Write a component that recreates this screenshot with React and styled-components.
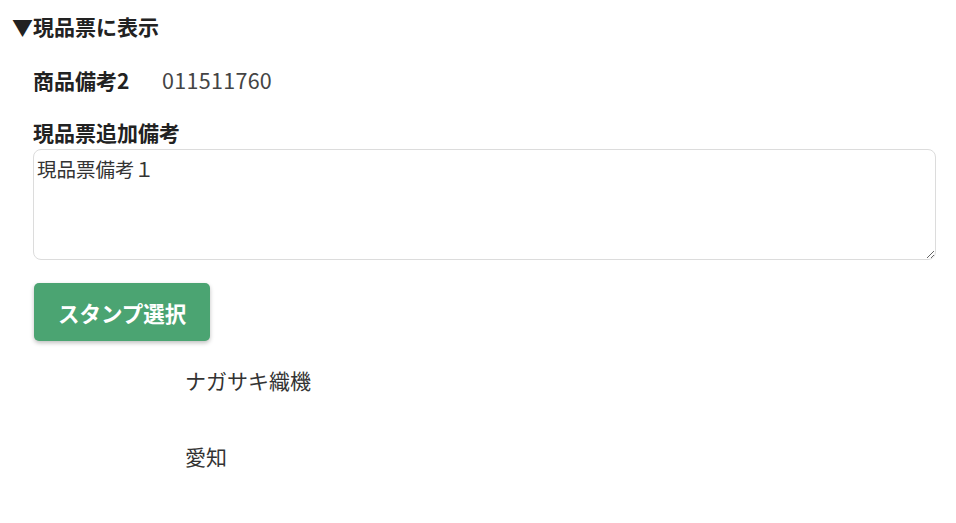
import React from "react";
import styled, { createGlobalStyle } from "styled-components";

const GlobalStyle = createGlobalStyle`
  body {
    margin: 0;
    background: #fff;
    font-family: "Noto Sans CJK JP", "Noto Sans", sans-serif;
    color: #333;
  }
`;

const Section = styled.section`
  padding: 10px 20px 40px 12px;
`;

const Title = styled.h2`
  margin: 0;
  font-size: 21px;
  font-weight: 700;
  line-height: 32px;
  color: #222;
`;

const Body = styled.div`
  padding-left: 21px;
  display: flex;
  flex-direction: column;
`;

const InfoRow = styled.div`
  display: flex;
  align-items: center;
  margin-top: 22px;
  font-size: 21px;
  line-height: 32px;
`;

const InfoLabel = styled.span`
  font-weight: 700;
  width: 129px;
  color: #222;
`;

const InfoValue = styled.span`
  color: #444;
  font-size: 21.5px;
  letter-spacing: 0.3px;
`;

const FieldLabel = styled.label`
  margin-top: 20px;
  font-size: 21px;
  font-weight: 700;
  line-height: 32px;
  color: #222;
`;

const Memo = styled.textarea`
  box-sizing: border-box;
  width: 100%;
  height: 111px;
  margin: 1px 0 0 0;
  padding: 5px 3px;
  border: 1.5px solid #dcdcdc;
  border-radius: 8px;
  font-family: inherit;
  font-size: 19.5px;
  line-height: 28px;
  color: #333;
  outline: none;
`;

const StampButton = styled.button`
  align-self: flex-start;
  margin: 23px 0 0 1px;
  height: 58px;
  padding: 0 24px 0 24px;
  border: none;
  border-radius: 5px;
  background: #4ba472;
  color: #fff;
  font-family: inherit;
  font-size: 21.5px;
  font-weight: 700;
  box-shadow: 0 2px 4px rgba(0, 0, 0, 0.25);
  cursor: pointer;
`;

const StampList = styled.div`
  display: flex;
  flex-direction: column;
  gap: 44px;
  margin-top: 23px;
  padding-left: 152px;
`;

const StampName = styled.div`
  font-size: 21px;
  line-height: 32px;
  color: #333;
`;

export default function App() {
  const stamps = ["ナガサキ織機", "愛知"];
  return (
    <>
      <GlobalStyle />
      <Section>
        <Title>▼現品票に表示</Title>
        <Body>
          <InfoRow>
            <InfoLabel>商品備考2</InfoLabel>
            <InfoValue>011511760</InfoValue>
          </InfoRow>
          <FieldLabel>現品票追加備考</FieldLabel>
          <Memo defaultValue="現品票備考１" />
          <StampButton>スタンプ選択</StampButton>
          <StampList>
            {stamps.map((s) => (
              <StampName key={s}>{s}</StampName>
            ))}
          </StampList>
        </Body>
      </Section>
    </>
  );
}
